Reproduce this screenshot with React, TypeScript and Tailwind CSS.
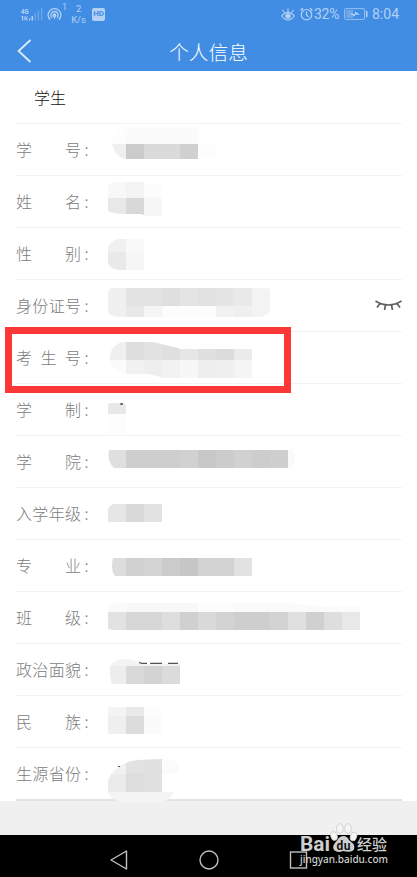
import { Fragment } from 'react'

type Cell = [number, number, number, number, string]
type Field = { label: string; cells: Cell[]; clip?: string; marks?: string; hidden?: boolean }

// Cell coordinates: x from the value column's left edge, y from the row's top.
const fields: Field[] = [
  {
    label: '学号',
    clip: 'M4 20Q7 5 18 3H107V35H18Q8 34 4 20Z',
    cells: [[4, 3, 14, 17, '#fdfdfd'], [18, 3, 72, 17, '#fbfbfb'], [4, 20, 14, 15, '#efefef'], [18, 20, 18, 15, '#cbcbcb'], [36, 20, 36, 15, '#dadada'], [72, 20, 18, 15, '#d0d0d0'], [90, 20, 18, 14, '#fdfdfd']],
  },
  {
    label: '姓名',
    clip: 'M0 8Q8 6 18 6H36V8H54V40H36L34 38H18Q5 38 0 35Z',
    cells: [[0, 6, 18, 16, '#f8f8f8'], [18, 6, 18, 16, '#f3f3f3'], [36, 6, 18, 16, '#fcfcfc'], [0, 22, 18, 17, '#e8e8e8'], [18, 22, 18, 17, '#d8d8d8'], [36, 22, 18, 18, '#f7f7f7']],
  },
  {
    label: '性别',
    clip: 'M10 11H36V42H10Q0 39 0 34V19Q3 13 10 11Z',
    cells: [[0, 11, 18, 13, '#f0f0f0'], [18, 11, 18, 13, '#f9f9f9'], [0, 24, 18, 18, '#e9e9e9'], [18, 24, 18, 18, '#f6f6f6']],
  },
  {
    label: '身份证号',
    hidden: true,
    clip: 'M4 8H158Q162 8 162 12V31Q158 37 150 37H12Q0 36 0 32V12Q1 8 4 8Z',
    cells: [[0, 8, 18, 18, '#f0f0f0'], [18, 8, 36, 18, '#e3e3e3'], [54, 8, 18, 18, '#dfdfdf'], [72, 8, 18, 18, '#e4e4e4'], [90, 8, 18, 18, '#e2e2e2'], [108, 8, 18, 18, '#e5e5e5'], [126, 8, 18, 18, '#e9e9e9'], [144, 8, 18, 18, '#f3f3f3'], [0, 26, 18, 11, '#f0f0f0'], [18, 26, 18, 11, '#e8e8e8'], [36, 26, 18, 11, '#f5f5f5'], [54, 26, 54, 11, '#fdfdfd'], [108, 26, 18, 11, '#f2f2f2'], [126, 26, 18, 11, '#efefef'], [144, 26, 18, 11, '#f3f3f3']],
  },
  {
    label: '考生号',
    clip: 'M14 10H45L74 17H144V46H57L40 42H18Q2 38 2 27Q2 13 14 10Z',
    cells: [[2, 10, 16, 18, '#efefef'], [18, 10, 18, 18, '#dedede'], [36, 10, 18, 18, '#e2e2e2'], [54, 10, 18, 18, '#dfdfdf'], [72, 17, 18, 11, '#e6e6e6'], [90, 17, 18, 11, '#dfdfdf'], [108, 17, 18, 11, '#dcdcdc'], [126, 17, 18, 11, '#ebebeb'], [2, 28, 16, 18, '#fbfbfb'], [18, 28, 18, 18, '#f1f1f1'], [36, 28, 18, 18, '#eeeeee'], [54, 28, 18, 18, '#f2f2f2'], [72, 28, 18, 18, '#f7f7f7'], [90, 28, 18, 18, '#eeeeee'], [108, 28, 18, 18, '#f0f0f0'], [126, 28, 18, 18, '#f5f5f5']],
  },
  {
    label: '学制',
    clip: 'M3 19H15L18 21V51H0V20Z',
    cells: [[0, 19, 18, 11, '#e8e8e8'], [0, 30, 18, 21, '#fdfdfd']],
    marks: 'M12 20.200h3M13 19.700h1.500',
  },
  {
    label: '学院',
    clip: 'M1 14H184Q188 20 187 26Q186 31 181 32H6Q-1 26 1 14Z',
    cells: [[0, 14, 18, 18, '#dfdfdf'], [18, 14, 54, 18, '#cecece'], [72, 14, 18, 18, '#d1d1d1'], [90, 14, 18, 18, '#c8c8c8'], [108, 14, 18, 18, '#cccccc'], [126, 14, 18, 18, '#d1d1d1'], [144, 14, 18, 18, '#cdcdcd'], [162, 14, 18, 18, '#cfcfcf'], [180, 14, 8, 18, '#fafafa']],
  },
  {
    label: '入学年级',
    clip: 'M5 16H54V34H0V23Q0 19 5 16Z',
    cells: [[0, 16, 18, 18, '#e6e6e6'], [18, 16, 18, 18, '#d9d9d9'], [36, 16, 18, 18, '#e2e2e2']],
  },
  {
    label: '专业',
    clip: 'M5 18H144V36H7Q4 32 4 27Q4 21 5 18Z',
    cells: [[4, 18, 14, 18, '#dddddd'], [18, 18, 18, 18, '#d1d1d1'], [36, 18, 18, 18, '#d4d4d4'], [54, 18, 18, 18, '#cbcbcb'], [72, 18, 18, 18, '#c6c6c6'], [90, 18, 36, 18, '#d3d3d3'], [126, 18, 18, 18, '#e2e2e2']],
  },
  {
    label: '班级',
    clip: 'M10 11H180L215 15H252V38H5L0 37V18Q2 12 10 11Z',
    cells: [[0, 11, 18, 9, '#fafafa'], [18, 11, 72, 9, '#f8f8f8'], [90, 11, 90, 9, '#fcfcfc'], [126, 11, 90, 9, '#fafafa'], [216, 15, 36, 5, '#fbfbfb'], [0, 20, 18, 18, '#e2e2e2'], [18, 20, 36, 18, '#d7d7d7'], [54, 20, 18, 18, '#dedede'], [72, 20, 18, 18, '#d0d0d0'], [90, 20, 18, 18, '#d9d9d9'], [108, 20, 18, 18, '#d3d3d3'], [126, 20, 36, 18, '#cecece'], [162, 20, 18, 18, '#d3d3d3'], [180, 20, 18, 18, '#e0e0e0'], [198, 20, 18, 18, '#d0d0d0'], [216, 20, 18, 18, '#dedede'], [234, 20, 18, 18, '#e8e8e8']],
  },
  {
    label: '政治面貌',
    clip: 'M2 22Q7 15 17 15Q26 15 32 20H72V40H4Q1 32 2 22Z',
    cells: [[2, 15, 34, 7, '#f3f3f3'], [36, 20, 36, 2, '#f2f2f2'], [2, 22, 16, 18, '#ededed'], [18, 22, 18, 18, '#d9d9d9'], [36, 22, 18, 18, '#d3d3d3'], [54, 22, 18, 18, '#dbdbdb']],
    marks: 'M31 18.400l2 .8M33 19.400h6M42 19.400h12M60 19.400h10',
  },
  {
    label: '民族',
    cells: [[0, 11, 18, 9, '#f4f4f4'], [18, 11, 18, 9, '#e9e9e9'], [36, 11, 18, 9, '#fdfdfd'], [0, 20, 18, 18, '#efefef'], [18, 20, 18, 18, '#dcdcdc'], [36, 20, 18, 18, '#fbfbfb']],
  },
  {
    label: '生源省份',
    clip: 'M29 12L54 11L68 13Q73 19 70 25L54 26V44H66Q61 55 48 55H16Q3 53 0 44V32Q7 15 29 12Z',
    cells: [[0, 11, 18, 15, '#f1f1f1'], [18, 11, 18, 15, '#e2e2e2'], [36, 11, 18, 15, '#e1e1e1'], [54, 11, 18, 16, '#fbfbfb'], [0, 26, 18, 18, '#ebebeb'], [18, 26, 18, 18, '#dddddd'], [36, 26, 18, 18, '#e1e1e1'], [0, 44, 66, 11, '#f4f4f4']],
    marks: 'M10 18.500h2',
  },
]

function Mosaic({ field, index }: { field: Field; index: number }) {
  const id = 'mask-' + index
  return (
    <svg className="relative z-10 h-[52px] w-[260px] shrink-0 overflow-visible" viewBox="0 0 260 52" shapeRendering="crispEdges">
      {field.clip && (
        <clipPath id={id}>
          <path d={field.clip} />
        </clipPath>
      )}
      <g clipPath={field.clip ? `url(#${id})` : undefined}>
        {field.cells.map(([x, y, w, h, fill], i) => (
          <rect key={i} x={x} y={y} width={w} height={h} fill={fill} />
        ))}
      </g>
      {field.marks && <path d={field.marks} stroke="#555" strokeWidth="1.2" fill="none" shapeRendering="auto" />}
    </svg>
  )
}

function StatusBar() {
  return (
    <div className="flex h-7 items-center pl-[21px] font-[Roboto,sans-serif] text-[#b3d1f5]">
      <svg className="h-[15px] w-[22px]" viewBox="0 0 22 15" fill="currentColor">
        <text x="0" y="7" fontSize="7.500" fontWeight="700" textLength="7.500" lengthAdjust="spacingAndGlyphs">4G</text>
        <path d="M.5 9h1.700v4.500H1V10H.5zM3.500 9h1v4.500h-1zM4.500 11l1.700-1.500h1l-1.500 1.700 1.500 2.300H6l-1.500-2zM8 11.500h1.300v2H8zM10.500 9h1.500v4.500h-1.500z" />
        <path d="M13.500 5.500h1.300v8h-1.300zM16.700 3.500H18v10h-1.300zM20 1h1.300v12.500H20z" opacity=".4" />
      </svg>
      <svg className="ml-1 h-[15px] w-[15px]" viewBox="0 0 15 15" fill="none" stroke="currentColor" strokeWidth="1.300">
        <path d="M3.200 12.800A6.400 6.400 0 1 1 11.800 12.800M5 10.700A3.600 3.600 0 1 1 10 10.700" />
        <circle cx="7.500" cy="8.300" r="1.300" fill="currentColor" />
        <path d="M7.500 9.500V12" />
      </svg>
      <span className="mb-[14px] text-[9px] leading-none">1</span>
      <div className="ml-[4px] w-[15px] text-center text-[9.500px] leading-[11px]">
        <div>2</div>
        <div>K/s</div>
      </div>
      <span className="ml-[6px] flex h-[13px] w-[13px] items-center justify-center rounded-[2px] bg-[#b3d1f5] text-[8px] font-bold leading-none text-[#418de3]">HD</span>
      <div className="ml-auto flex items-center pr-[18px]">
        <svg className="h-[14px] w-[14px]" viewBox="0 0 14 14" fill="none" stroke="currentColor" strokeWidth="1.200">
          <path d="M.7 9Q3.500 5.300 7 5.300T13.300 9Q10.500 13 7 13T.7 9ZM7 5V1.500M3.500 5.500L1.500 3M10.500 5.500L12.500 3" />
          <circle cx="7" cy="9" r="2.200" fill="currentColor" />
        </svg>
        <svg className="ml-[5px] h-[14px] w-[13px]" viewBox="0 0 13 14" fill="none" stroke="currentColor" strokeWidth="1.200">
          <circle cx="6.500" cy="7.700" r="5.200" />
          <path d="M6.500 4.500V8l2 2M.7 3.500L3 1M12.300 3.500L10 1" />
        </svg>
        <span className="ml-[1px] w-[27px] text-[14px] leading-none tracking-[-0.3px]">32%</span>
        <svg className="ml-[3px] h-[12px] w-[24px]" viewBox="0 0 24 12">
          <rect x=".6" y=".6" width="20" height="10.800" rx="1" fill="none" stroke="currentColor" opacity=".75" />
          <path d="M2 2h7v8H2z" fill="currentColor" opacity=".4" />
          <path d="M5.500 5.500L11 6V3.500L16 6.500L11 6.700V8.500Z" fill="currentColor" />
          <path d="M22 3h1.500v6H22z" fill="currentColor" />
        </svg>
        <span className="ml-[4px] w-[27px] text-[14px] leading-none">8:04</span>
      </div>
    </div>
  )
}

function Watermark() {
  return (
    <svg className="absolute left-[299px] top-[822px] h-[48px] w-[94px] overflow-visible" viewBox="0 0 94 48">
      <g fill="#cfcfcf">
        <g fill="#f5f5f5" stroke="#cacaca" strokeWidth=".8">
          <ellipse cx="35" cy="14" rx="3.200" ry="4.500" transform="rotate(-15 35 14)" />
          <ellipse cx="40.800" cy="6.500" rx="3.300" ry="4.900" />
          <ellipse cx="49" cy="6.500" rx="3.300" ry="4.900" />
          <ellipse cx="54.500" cy="14.500" rx="3.200" ry="4.500" transform="rotate(15 54.500 14.500)" />
        </g>
        <path d="M44.500 14Q48 14 50 18L54.500 22Q57 28 52 29.500Q48 30 44 29Q39 31 35.500 28.500Q32.500 25 36 21L39 17Q41 14 44.500 14Z" />
        <text x="1" y="28.500" fontFamily="Roboto, sans-serif" fontSize="20" fontWeight="700" textLength="30" lengthAdjust="spacingAndGlyphs">Bai</text>
        <text x="37.500" y="28" fontFamily="Roboto, sans-serif" fontSize="12" fontWeight="700" fill="#111" textLength="14">du</text>
        <text x="58" y="27.500" fontFamily="'Noto Sans CJK SC', sans-serif" fontSize="15" fontWeight="500" textLength="30" lengthAdjust="spacingAndGlyphs">经验</text>
        <text x="1" y="41" fontFamily="'Noto Sans', sans-serif" fontSize="10.500" fontWeight="500" textLength="88" lengthAdjust="spacingAndGlyphs">jingyan.baidu.com</text>
      </g>
    </svg>
  )
}

export default function App() {
  return (
    <div className="relative flex h-[877px] w-[417px] flex-col overflow-hidden bg-[#f0f0f0] font-['Noto_Sans_CJK_SC',sans-serif]">
      <header className="h-[71px] bg-[#418de3] text-white">
        <StatusBar />
        <div className="grid h-[43px] grid-cols-[48px_1fr_48px] items-center">
          <svg className="ml-[17px] mt-[3px] h-6 w-4" viewBox="0 0 16 24" fill="none" stroke="#e2eefc" strokeWidth="1.700">
            <path d="M13.500 1L1.500 12L13.500 23" />
          </svg>
          <h1 className="pt-[5px] text-center text-[19.700px] font-light leading-none">个人信息</h1>
        </div>
      </header>
      <main className="h-[730px] bg-white pl-4 pr-[15px]">
        <div className="flex h-[53px] items-center border-b border-[#f3f3f3] pb-px pl-[18px] text-[16px] font-light text-[#111]">学生</div>
        {fields.map((field, i) => (
          <Fragment key={field.label}>
            <div
              className={
                i === fields.length - 1
                  ? 'flex h-[53px] items-start border-b-2 border-[#e3e3e3]'
                  : 'flex h-[52px] items-start border-b border-[#f3f3f3]'
              }
            >
              <div className="flex h-[50px] w-[92px] shrink-0 items-center text-[16px] font-light text-[#7c7c7c]">
                <span className="flex w-[65px] justify-between">
                  {field.label.split('').map((c, n) => (
                    <span key={n}>{c}</span>
                  ))}
                </span>
                <span className="ml-[3.500px]">:</span>
              </div>
              <Mosaic field={field} index={i} />
              {field.hidden && (
                <svg className="ml-auto mt-[19px] h-[12px] w-[27px] shrink-0" viewBox="0 0 27 12" fill="none" stroke="#606060" strokeWidth="1.700">
                  <path d="M.5 2Q13.500 10 26.500 2M5 4.500L2 8.500M10.500 6L9.500 11M16.500 6L17.500 11M22 4.500L25 8.500" />
                </svg>
              )}
            </div>
          </Fragment>
        ))}
      </main>
      <footer className="mt-auto grid h-[42px] grid-cols-[74px_90px_90px_90px_73px] items-center justify-items-center bg-black pt-[8px]">
        <svg className="col-start-2 h-5 w-5" viewBox="0 0 20 20" fill="none" stroke="#c0c0c0" strokeWidth="1.400">
          <path d="M17.500 1V19L2 10Z" strokeLinejoin="round" />
        </svg>
        <svg className="h-5 w-5" viewBox="0 0 20 20" fill="none" stroke="#c0c0c0" strokeWidth="1.400">
          <circle cx="10" cy="10" r="9" />
        </svg>
        <svg className="h-5 w-5" viewBox="0 0 20 20" fill="none" stroke="#c0c0c0" strokeWidth="1.400">
          <rect x="1.500" y="2" width="16" height="16" />
        </svg>
      </footer>
      <div className="absolute left-[5px] top-[327px] h-[66px] w-[286px] border-[7px] border-[#fc3737]" />
      <Watermark />
    </div>
  )
}
